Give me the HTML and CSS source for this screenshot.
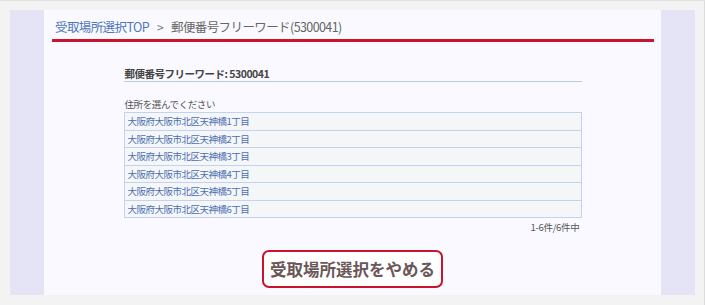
FILE: index.html
```html
<!DOCTYPE html>
<html lang="ja">
<head>
  <meta charset="UTF-8" />
  <title>受取場所選択</title>
  <link rel="stylesheet" href="styles.css">
</head>
<body>
  <div class="frame">
    <div class="side"></div>
    <div class="main">
      <div class="crumbs">
        <a href="#" class="crumb-link">受取場所選択TOP</a>
        <span class="crumb-sep">&gt;</span>
        <span class="crumb-current">郵便番号フリーワード(5300041)</span>
      </div>

      <div class="content">
        <h2 class="result-title">郵便番号フリーワード: 5300041</h2>
        <p class="hint">住所を選んでください</p>
        <ul class="addr-list">
          <li><a href="#">大阪府大阪市北区天神橋1丁目</a></li>
          <li><a href="#">大阪府大阪市北区天神橋2丁目</a></li>
          <li><a href="#">大阪府大阪市北区天神橋3丁目</a></li>
          <li><a href="#">大阪府大阪市北区天神橋4丁目</a></li>
          <li><a href="#">大阪府大阪市北区天神橋5丁目</a></li>
          <li><a href="#">大阪府大阪市北区天神橋6丁目</a></li>
        </ul>
        <div class="count">1-6件/6件中</div>
      </div>

      <div class="actions">
        <button class="cancel-btn">受取場所選択をやめる</button>
      </div>
    </div>
    <div class="side"></div>
  </div>
</body>
</html>
```

FILE: styles.css
```css
html, body {
  margin: 0;
  padding: 0;
}
body {
  width: 705px;
  height: 305px;
  background-color: #f3f3f3;
  font-family: "Noto Sans CJK JP", "Liberation Sans", sans-serif;
  color: #555;
  box-sizing: border-box;
  border-top: 1px solid #e2e2e2;
  border-right: 1px solid #dcdcdc;
  padding: 9px 9px 0 10px;
}
.frame {
  display: grid;
  grid-template-columns: 34px 1fr 34px;
  height: 285px;
}
.side {
  background-color: #e4e4f6;
}
.main {
  background-color: #f9f9ff;
  display: flex;
  flex-direction: column;
}
/* breadcrumb */
.crumbs {
  margin: 0 7px 0 8px;
  padding: 4px 0 0 3px;
  height: 25px;
  border-bottom: 3px solid #c8142c;
  font-size: 12.5px;
  line-height: 20px;
  display: flex;
  align-items: center;
  gap: 8px;
  letter-spacing: -0.6px;
}
.crumb-link {
  color: #4f76be;
  text-decoration: none;
}
.crumb-sep {
  color: #777;
  font-size: 12px;
}
.crumb-current {
  color: #666;
}
/* result list */
.content {
  width: 458px;
  margin: 0 auto;
  padding-top: 25px;
}
.result-title {
  margin: 0;
  font-size: 10.5px;
  font-weight: bold;
  color: #444;
  letter-spacing: -0.5px;
  line-height: 14px;
  padding: 0 0 0 1px;
  border-bottom: 1px solid #b9c9ea;
}
.hint {
  margin: 15px 0 1px 1px;
  font-size: 9.5px;
  line-height: 14px;
  color: #555;
  letter-spacing: -0.4px;
}
.addr-list {
  list-style: none;
  margin: 0;
  padding: 0;
  border: 1px solid #c2d2f2;
}
.addr-list li {
  height: 16.5px;
  display: flex;
  align-items: center;
  font-size: 9.5px;
  background-color: #f5f6f8;
  border-top: 1px solid #c2d2f2;
  padding-left: 3px;
}
.addr-list li:first-child {
  border-top: none;
}
.addr-list a {
  color: #4b6fb3;
  text-decoration: none;
  letter-spacing: -0.5px;
  line-height: 12px;
}
.count {
  text-align: right;
  font-size: 9.5px;
  line-height: 14px;
  margin-top: 2px;
  padding-right: 2px;
  color: #555;
  letter-spacing: -0.3px;
}
/* cancel button */
.actions {
  display: flex;
  justify-content: center;
  padding-top: 16px;
}
.cancel-btn {
  width: 181px;
  height: 38px;
  background-color: #fff;
  border: 2px solid #c8142c;
  border-radius: 7px;
  color: #6b5757;
  font-family: "Noto Sans CJK JP", sans-serif;
  font-size: 16.5px;
  font-weight: bold;
  padding: 0;
  cursor: pointer;
}
```
